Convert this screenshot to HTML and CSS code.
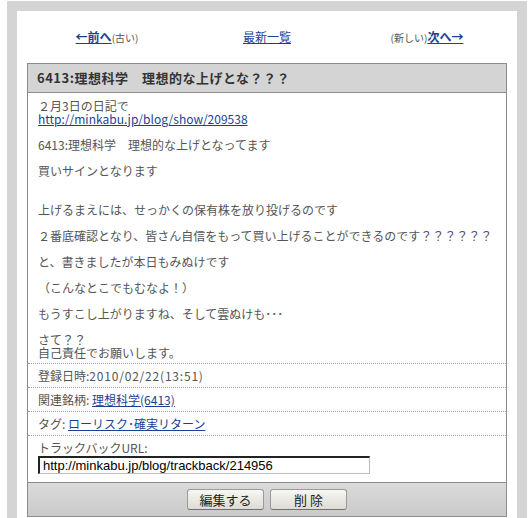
FILE: index.html
```html
<!doctype html>
<html>
<head>
<meta charset="utf-8">
<title>6413:理想科学　理想的な上げとな？？？</title>
<link rel="stylesheet" href="styles.css">
</head>

<body>
<div class="frame">
	<div class="inner">
		<div class="nav">
			<div class="nav_cell"><a href="javascript:;" class="nav_b">←前へ</a><span class="nav_s">(古い)</span></div>
			<div class="nav_cell"><a href="javascript:;">最新一覧</a></div>
			<div class="nav_cell"><span class="nav_s">(新しい)</span><a href="javascript:;" class="nav_b">次へ→</a></div>
		</div>
		<div class="entry">
			<h2 class="entry_title">6413:理想科学　理想的な上げとな？？？</h2>
			<div class="entry_body">
				<p>２月3日の日記で<br><a href="javascript:;">http://minkabu.jp/blog/show/209538</a></p>
				<p>6413:理想科学　理想的な上げとなってます</p>
				<p>買いサインとなります<br><br></p>
				<p>上げるまえには、せっかくの保有株を放り投げるのです</p>
				<p>２番底確認となり、皆さん自信をもって買い上げることができるのです？？？？？？</p>
				<p>と、書きましたが本日もみぬけです</p>
				<p>（こんなとこでもむなよ！）</p>
				<p>もうすこし上がりますね、そして雲ぬけも･･･</p>
				<p>さて？？<br>自己責任でお願いします。</p>
			</div>
			<div class="meta">登録日時:<span class="num">2010/02/22(13:51)</span></div>
			<div class="meta">関連銘柄: <a href="javascript:;">理想科学(6413)</a></div>
			<div class="meta">タグ: <a href="javascript:;">ローリスク･確実リターン</a></div>
			<div class="track">
				<div class="track_label">トラックバックURL:</div>
				<input type="text" class="track_url" value="http://minkabu.jp/blog/trackback/214956">
			</div>
			<div class="foot">
				<button class="btn">編集する</button>
				<button class="btn">削 除</button>
			</div>
		</div>
	</div>
</div>
</body>
</html>
```

FILE: styles.css
```css
*{margin:0; padding:0;}
body{background:#fff; font-family:"Noto Sans CJK JP", sans-serif; font-size:12px; color:#555; margin:1px 4px 0 7px;}
a{color:#1c3f95;}
.frame{width:500px; border:10px solid #d4d4d4;}
.inner{background:#fff; padding:10px 10px 2px;}
.nav{display:grid; grid-template-columns:1fr 1fr 1fr; height:32px; align-items:center; margin-bottom:10px; line-height:14px;}
.nav_cell{text-align:center;}
.nav_b{font-weight:bold;}
.nav_s{font-size:10px; color:#555;}
.entry{border:1px solid #8c8c8c;}
.entry_title{height:28px; line-height:28px; background:#d4d4d4; border-bottom:1px solid #8c8c8c; padding:0 9px; font-size:13px; letter-spacing:0.5px; color:#333;}
.entry_body{padding:6px 10px 4px; line-height:13px;}
.entry_body p{margin-bottom:13px;}
.entry_body p:last-child{margin-bottom:0;}
.meta{border-top:1px dotted #999; height:23px; line-height:23px; padding:0 10px;}
.meta .num{letter-spacing:0.8px;}
.track{border-top:1px dotted #999; padding:5px 10px 8px;}
.track_label{line-height:13px; margin-bottom:2px;}
.track_url{display:block; width:332px; height:18px; box-sizing:border-box; border:1px solid #bbb; border-top:2px solid #222; border-left:2px solid #222; padding:0 3px; font-family:"Liberation Sans", Arial, sans-serif; font-size:13px; color:#000; outline:none;}
.foot{border-top:1px solid #8c8c8c; background:linear-gradient(#dadada,#cacaca); height:33px; display:flex; justify-content:center; align-items:center; gap:6px;}
.btn{width:77px; height:21px; border:1px solid #9a9a9a; border-bottom-color:#707070; border-radius:3px; background:linear-gradient(#f7f7f2,#dcdcd4); font-family:"Noto Sans CJK JP", sans-serif; font-size:13px; color:#222; line-height:19px;}
```
